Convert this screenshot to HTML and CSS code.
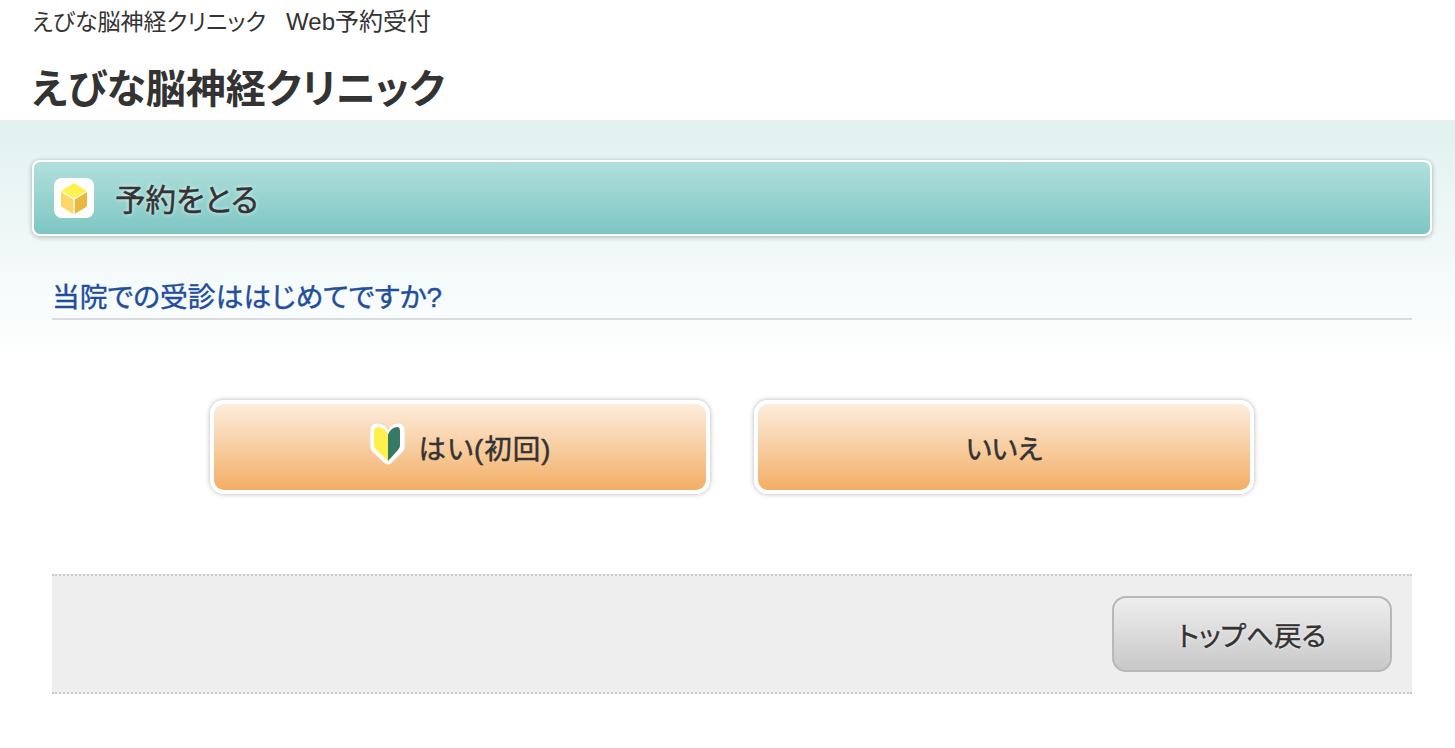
FILE: index.html
```html
<!DOCTYPE html>
<html lang="ja">
<head>
    <meta charset="UTF-8">
    <title>えびな脳神経クリニック Web予約受付</title>
    <link rel="stylesheet" href="styles.css">
</head>
<body>
    <header class="site-header">
        <p class="site-name">えびな脳神経クリニック　<span class="site-sub">Web予約受付</span></p>
        <h1 class="clinic-name">えびな脳神経クリニック</h1>
    </header>
    <main class="content">
        <div class="title-bar">
            <span class="title-icon">
                <svg width="26" height="31" viewBox="0 0 26 31">
                    <path d="M13 0 L26 8 L13 15.500 L0 8 Z" fill="#fff150"/>
                    <path d="M0 9 L12.300 16.500 L12.300 31 L0 23.500 Z" fill="#fcd766"/>
                    <path d="M26 9 L13.700 16.500 L13.700 31 L26 23.500 Z" fill="#e8b93e"/>
                </svg>
            </span>
            <h2>予約をとる</h2>
        </div>
        <section class="question">
            <h3>当院での受診ははじめてですか?</h3>
            <div class="choices">
                <button type="button" class="choice">
                    <svg class="leaf" width="37" height="44" viewBox="0 0 37 44">
                        <path d="M19 8 C17 4 13 1 8 1 C4 1 1 3.500 1 8 L1 24 C1 26.500 2 28.500 4 30.500 L16 41.500 C18 43 20 43 22 41.500 L33 30.500 C35 28.500 36 26.500 36 24 L36 8 C36 3.500 33 1 29 1 C25 1 21 4 19 8 Z" fill="#fff" stroke="#ecdcc8" stroke-width="1"/>
                        <path d="M19 13 C18 9 14 5 9 5 C6.500 5 5 6.500 5 9 L5 23 C5 25 6 26.500 7.500 28 L19 39 Z" fill="#fff04e"/>
                        <path d="M19 13 C20 9 24 5 28 5 C30 5 31 6.500 31 9 L31 23 C31 25 30 26.500 29 28 L19 39 Z" fill="#377a64"/>
                    </svg>
                    <span class="first-visit">はい(初回)</span>
                </button>
                <button type="button" class="choice"><span>いいえ</span></button>
            </div>
        </section>
        <footer class="actions">
            <button type="button" class="back-button">トップへ戻る</button>
        </footer>
    </main>
</body>
</html>
```

FILE: styles.css
```css
* {
    box-sizing: border-box;
}
body {
    margin: 0;
    font-family: "Liberation Sans", "Noto Sans CJK JP", sans-serif;
    font-feature-settings: "palt";
    color: #333;
    background-color: #fff;
}
.site-header {
    height: 120px;
    padding: 0 32px;
    overflow: hidden;
}
.site-name {
    margin: 0;
    padding-top: 7px;
    font-size: 23px;
    line-height: 30px;
}
.site-sub {
    margin-left: -3px;
    font-size: 24px;
}
.clinic-name {
    margin: 21px 0 0;
    font-size: 40px;
    line-height: 62px;
}
.content {
    padding: 40px 23px 0 32px;
    height: 628px;
    background: linear-gradient(#e1f1f0, #fff 240px);
}
.title-bar {
    display: flex;
    align-items: center;
    height: 76px;
    padding-left: 20px;
    border: 2px solid #fff;
    border-radius: 8px;
    background: linear-gradient(#b1e0dc, #7dc6c3);
    box-shadow: 0 1px 5px rgba(0, 0, 0, 0.3);
}
.title-icon {
    display: flex;
    align-items: center;
    justify-content: center;
    width: 40px;
    height: 40px;
    border-radius: 8px;
    background-color: #fff;
}
.title-bar h2 {
    margin: 0 0 0 21px;
    font-size: 30.500px;
    font-weight: normal;
    -webkit-text-stroke: 0.5px #333;
    text-shadow: 0 0 4px #fff;
}
.question {
    padding: 0 20px;
}
.question h3 {
    margin: 0;
    padding-top: 44px;
    height: 84px;
    line-height: 36px;
    font-size: 27.800px;
    font-weight: normal;
    -webkit-text-stroke: 0.4px #1f4e9c;
    color: #1f4e9c;
    border-bottom: 2px solid #d8dcdf;
}
.choices {
    display: flex;
    justify-content: center;
    gap: 44px;
    margin-top: 80px;
}
.choice {
    display: flex;
    align-items: center;
    justify-content: center;
    gap: 13px;
    width: 500px;
    height: 94px;
    padding: 0;
    border: 4px solid #fff;
    border-radius: 14px;
    background: linear-gradient(#fdeddd, #f3ae65);
    box-shadow: 0 0 5px rgba(0, 0, 0, 0.3);
    color: #333;
    font-family: inherit;
    font-feature-settings: inherit;
    font-size: 27.500px;
    -webkit-text-stroke: 0.5px #333;
    cursor: pointer;
}
.first-visit {
    letter-spacing: 1px;
}
.leaf {
    margin-top: -6px;
}
.actions {
    display: flex;
    justify-content: flex-end;
    align-items: center;
    height: 120px;
    margin: 80px 20px 0;
    padding-right: 20px;
    background-color: #eee;
    border-top: 2px dotted #ccc;
    border-bottom: 2px dotted #ccc;
}
.back-button {
    width: 280px;
    height: 76px;
    border: 2px solid #b8b8b8;
    border-radius: 14px;
    background: linear-gradient(#eee, #c8c8c8);
    color: #333;
    font-family: inherit;
    font-feature-settings: inherit;
    font-size: 27.500px;
    -webkit-text-stroke: 0.4px #333;
    text-shadow: 0 0 3px #fff;
    cursor: pointer;
}
```
